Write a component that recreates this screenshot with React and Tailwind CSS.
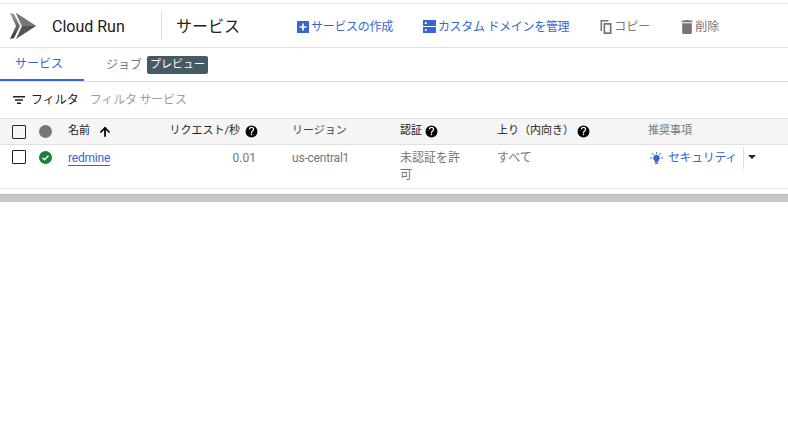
import { ArrowUp } from "lucide-react";

const jp = "font-['Roboto','Noto_Sans_CJK_JP',sans-serif]";
const cols = "grid grid-cols-[27px_29px_92px_100px_140px_97px_151px_1fr] pl-3";

function Help() {
  return (
    <svg width="13" height="13" viewBox="0 0 24 24" className="shrink-0">
      <path
        fill="#000"
        d="M12 1a11 11 0 1 0 0 22 11 11 0 0 0 0-22zm1.200 18h-2.500v-2.500h2.500V19zm2.600-8.200-1.100 1.100c-.9.900-1.500 1.700-1.500 3.600h-2.500v-.6c0-1.400.6-2.600 1.500-3.600l1.600-1.600c.4-.4.7-1 .7-1.600a2.500 2.500 0 0 0-5 0H7a5 5 0 0 1 10 0c0 1-.5 2-1.200 2.700z"
      />
    </svg>
  );
}

function Checkbox() {
  return <div className="w-[14px] h-[14px] border-[1.5px] border-[#212121] rounded-[1px]" />;
}

export default function App() {
  return (
    <div className={`w-[788px] h-[421px] bg-white overflow-hidden text-[12px] ${jp}`}>
      <div className="h-[3px]" />
      {/* top bar */}
      <div className="h-[45px] border-y border-[#e0e0e0] flex items-center pt-[2px]">
        <svg width="28" height="28" viewBox="0 0 28 28" className="ml-[9px] -mt-[2px]">
          <defs>
            <linearGradient id="a" x1="0" y1="0" x2="0" y2="1">
              <stop offset="0" stopColor="#9e9e9e" />
              <stop offset="1" stopColor="#333" />
            </linearGradient>
          </defs>
          <path fill="url(#a)" d="M1 1l6 13-6 13 4-1 6-12-6-12z" />
          <path fill="#555" d="M7 1l6 13-6 13 20-13z" />
          <path fill="#777" d="M7 1l6 13h14z" />
        </svg>
        <span className="ml-[15px] w-[109px] text-[16px] leading-none text-[#212121]">Cloud Run</span>
        <div className="w-px h-[29px] -mt-[2px] bg-[#e0e0e0]" />
        <span className="ml-[14px] w-[121px] text-[16px] text-[#212121]">サービス</span>
        <div className="flex items-center text-[#3367d6]">
          <svg width="12" height="12" viewBox="0 0 14 14">
            <path fill="#3367d6" d="M1 0h12a1 1 0 0 1 1 1v12a1 1 0 0 1-1 1H1a1 1 0 0 1-1-1V1a1 1 0 0 1 1-1zm5 3v3H3v2h3v3h2V8h3V6H8V3z" />
          </svg>
          <span className="ml-[2px] tracking-[-0.3px]">サービスの作成</span>
        </div>
        <div className="ml-[30px] flex items-center text-[#3367d6]">
          <svg width="13" height="13" viewBox="0 0 14 14">
            <path fill="#3367d6" d="M0 0h14v6.500H0zM0 7.500h14V14H0zM2 2.200v2h2v-2zm0 7.500v2h2v-2z" fillRule="evenodd" />
          </svg>
          <span className="ml-[2px] tracking-[-0.3px]">カスタム ドメインを管理</span>
        </div>
        <div className="ml-[31px] flex items-center text-[#757575]">
          <svg width="12" height="14" viewBox="1 0 11 14">
            <path fill="#757575" d="M1 0h8v1.500H2.500V11H1zM4 3h8v11H4zm1.700 1.700v7.600h4.600V4.700z" fillRule="evenodd" />
          </svg>
          <span className="ml-[2px]">コピー</span>
        </div>
        <div className="ml-[31px] flex items-center text-[#757575]">
          <svg width="12" height="14" viewBox="2 1 10 13">
            <path fill="#757575" d="M2.500 4h9v8.500a1.500 1.500 0 0 1-1.500 1.500H4a1.500 1.500 0 0 1-1.500-1.500zM2 1.500h3L5.500 1h3l.5.500h3V3H2z" />
          </svg>
          <span className="ml-[2px]">削除</span>
        </div>
      </div>
      {/* tabs */}
      <div className="h-[34px] border-b border-[#e0e0e0] flex">
        <div className="w-[84px] h-[33px] border-b-2 border-[#3367d6] text-[#3367d6] flex items-center pl-[15px]">
          サービス
        </div>
        <div className="ml-[22px] flex items-center text-[#757575]">
          ジョブ
          <span className="ml-[5px] mt-px h-[18px] px-[3px] rounded-[2px] bg-[#455a64] text-white text-[11px] flex items-center">プレビュー</span>
        </div>
      </div>
      {/* filter */}
      <div className="h-[36px] flex items-center pl-3 pb-px">
        <svg width="14" height="14" viewBox="0 0 14 14">
          <path fill="#212121" d="M1 3h12v1.500H1zM3 6.300h8v1.500H3zM5 9.600h4v1.500H5z" />
        </svg>
        <span className="ml-[5px] text-[#212121]">フィルタ</span>
        <span className="ml-[11px] text-[#9e9e9e] tracking-[-0.2px]">フィルタ サービス</span>
      </div>
      {/* table head */}
      <div className={`${cols} h-[27px] border-y border-[#e0e0e0] bg-[#f5f5f5] items-center text-[#212121] text-[11px]`}>
        <Checkbox />
        <div className="w-[13px] h-[13px] rounded-full bg-[#757575]" />
        <div className="flex items-center gap-[8px]">
          名前 <ArrowUp size={14} strokeWidth={3} className="text-black" />
        </div>
        <div className="flex items-center justify-end gap-[5px] whitespace-nowrap pr-[2px]">
          リクエスト/秒 <Help />
        </div>
        <div className="pl-[32px] text-[#424242]">リージョン</div>
        <div className="flex items-center gap-[3px]">認証 <Help /></div>
        <div className="flex items-center gap-[3px]">上り（内向き） <Help /></div>
        <div className="text-[#757575]">推奨事項</div>
      </div>
      {/* row */}
      <div className={`${cols} h-[44px] border-b border-[#e0e0e0] items-start pt-[4px] text-[#757575]`}>
        <div className="pt-px"><Checkbox /></div>
        <div className="pt-[2px]">
          <svg width="13" height="13" viewBox="0 0 13 13">
            <circle cx="6.500" cy="6.500" r="6.500" fill="#188038" />
            <path d="M3.500 6.700l2 2 4-4" fill="none" stroke="#fff" strokeWidth="1.500" />
          </svg>
        </div>
        <div>
          <span className="text-[#3367d6] border-b border-[#3367d6] tracking-[-0.2px]">redmine</span>
        </div>
        <div className="text-right pr-[4px]">0.01</div>
        <div className="pl-[32px] tracking-[-0.2px]">us-central1</div>
        <div className="w-[60px] leading-[17px] pt-px">未認証を許可</div>
        <div>すべて</div>
        <div className="flex items-center h-[22px] -mt-[2px]">
          <svg width="13" height="13" viewBox="0 0 14 14" className="ml-[2px]">
            <path fill="#3367d6" d="M7 3a3.500 3.500 0 0 0-2 6.400V11h4V9.400A3.500 3.500 0 0 0 7 3zM5.500 11.700h3v1.300h-3zM6.500 0h1v2h-1zM0 6h2v1H0zM12 6h2v1h-2zM2 1.700l.8-.7 1.400 1.400-.8.700zM12 1.700l-.8-.7-1.400 1.400.8.700z" />
          </svg>
          <span className="ml-[5px] text-[#3367d6] tracking-[-0.4px]">セキュリティ</span>
          <div className="ml-[6px] w-px h-[22px] bg-[#e0e0e0]" />
          <svg width="8" height="4" viewBox="0 0 8 4" className="ml-[4px] -mt-[2px]"><path d="M0 0h8L4 4z" fill="#212121" /></svg>
        </div>
      </div>
      <div className="h-[5px]" />
      {/* scrollbar */}
      <div className="h-[8px] bg-[#c8c8c8] border-t border-[#bdbdbd]" />
    </div>
  );
}
